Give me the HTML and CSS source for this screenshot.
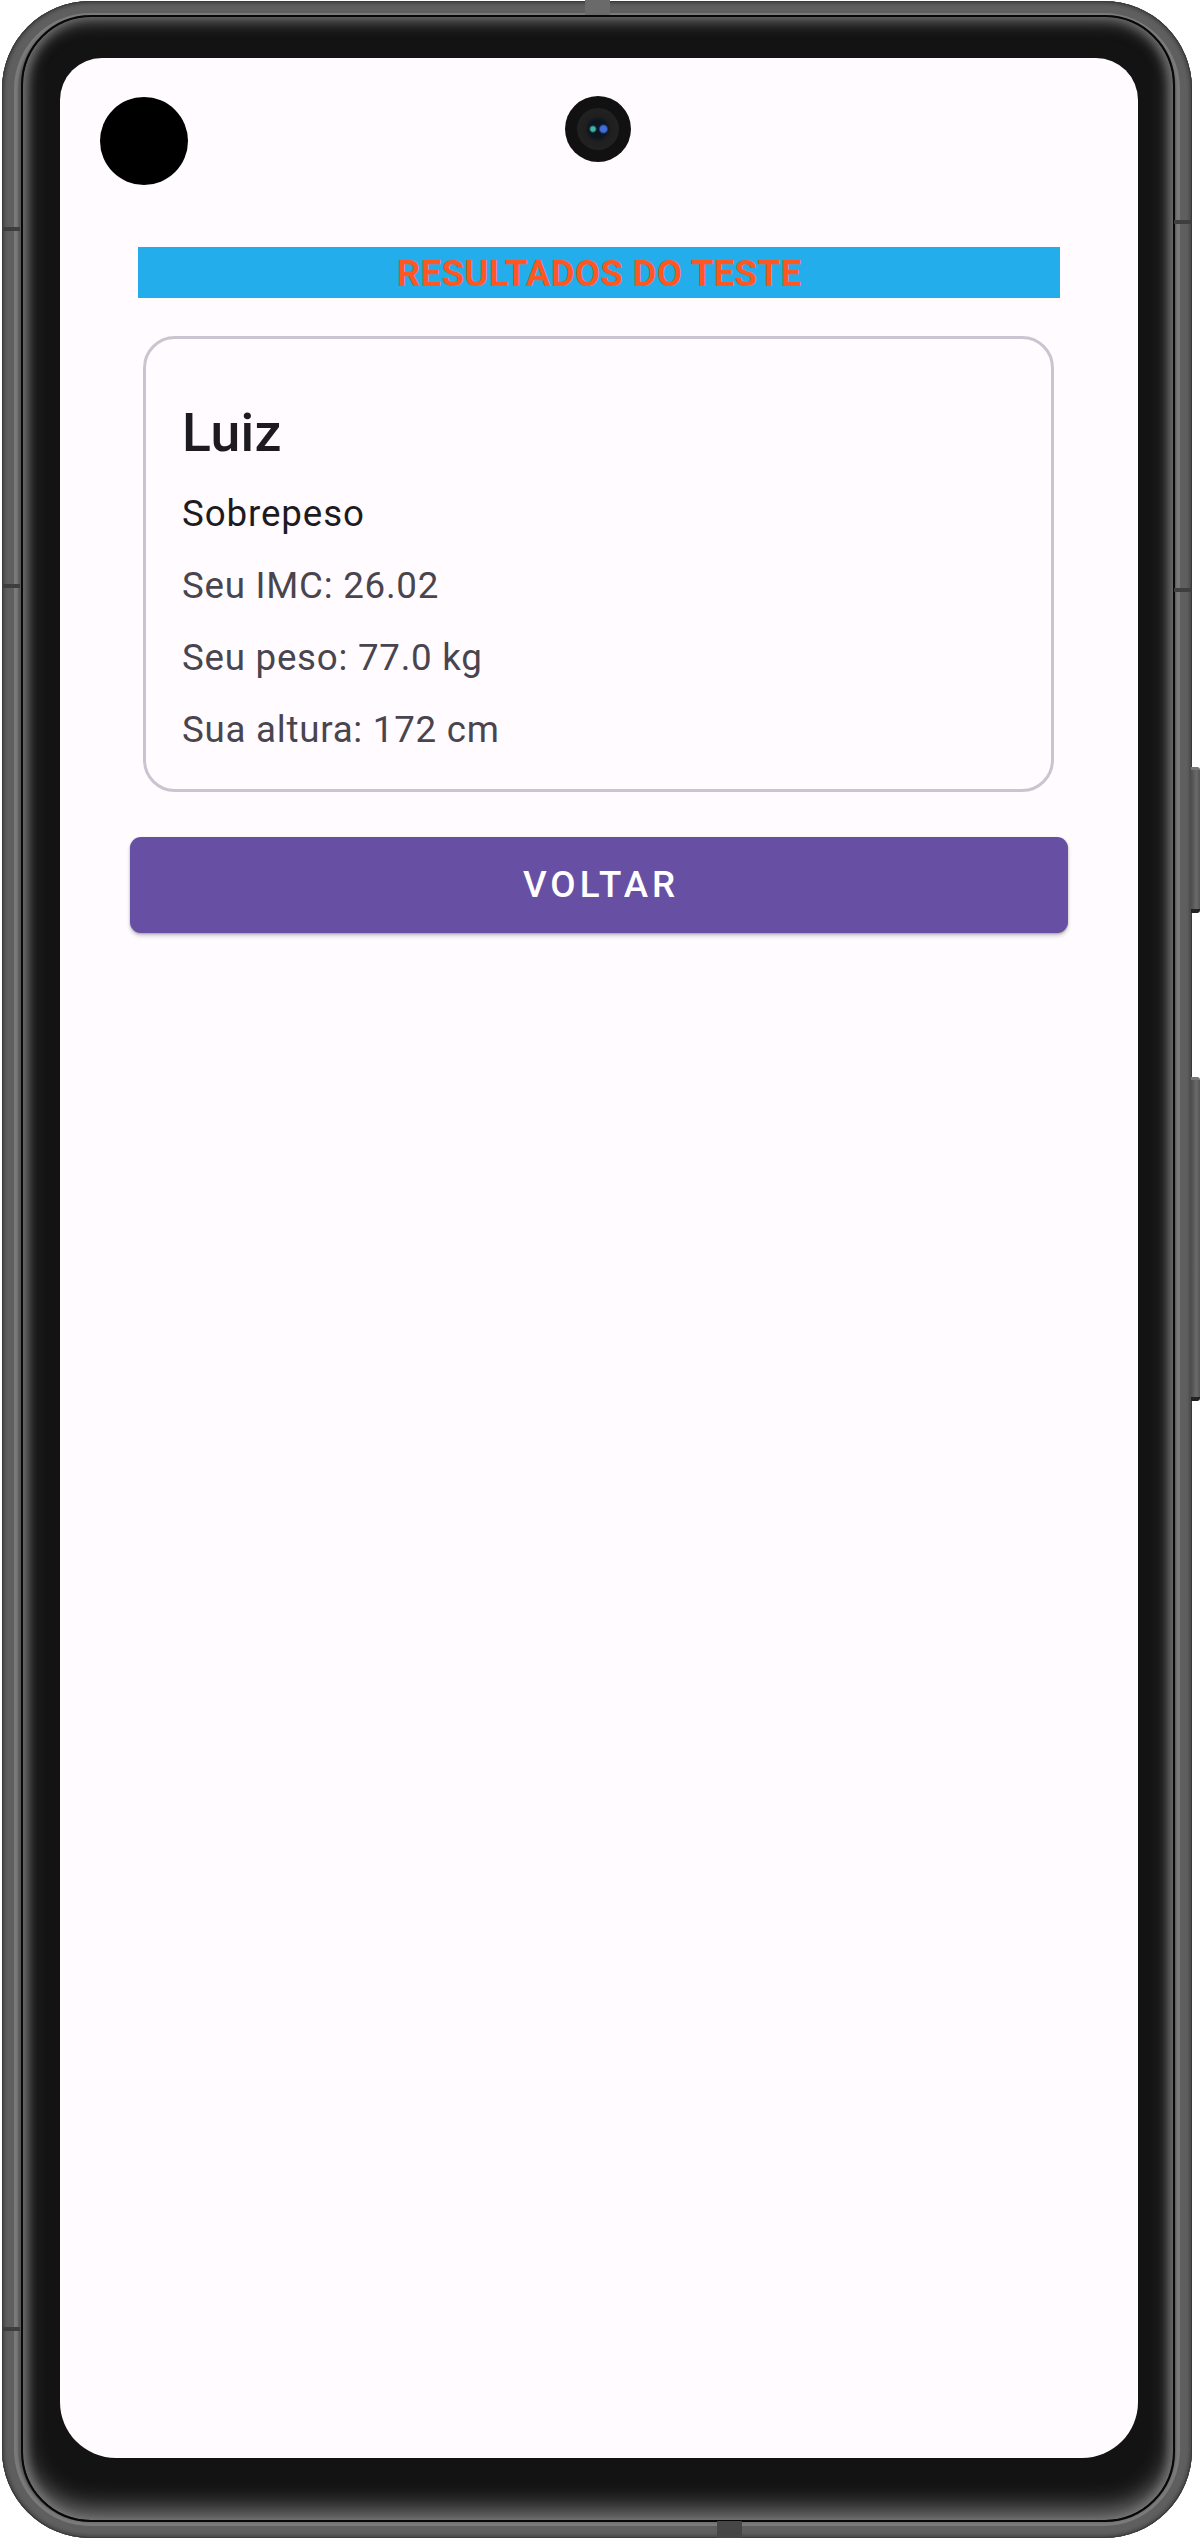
FILE: index.html
```html
<!DOCTYPE html>
<html lang="pt">
<head>
<meta charset="utf-8">
<title>Resultados do teste</title>
<link rel="stylesheet" href="styles.css">
</head>
<body>
<div class="phone">
  <span class="notch notch-top"></span>
  <span class="notch notch-bottom"></span>
  <span class="band band-l1"></span>
  <span class="band band-l2"></span>
  <span class="band band-l3"></span>
  <span class="band band-r1"></span>
  <span class="band band-r2"></span>
  <span class="side-btn side-btn-1"></span>
  <span class="side-btn side-btn-2"></span>
  <div class="ring">
    <div class="screen">
      <span class="dot"></span>
      <span class="camera"><span class="lens"></span></span>
      <main class="content">
        <div class="title-bar">RESULTADOS DO TESTE</div>
        <section class="card">
          <h1 class="name">Luiz</h1>
          <p class="line line-main">Sobrepeso</p>
          <p class="line">Seu IMC: 26.02</p>
          <p class="line">Seu peso: 77.0 kg</p>
          <p class="line">Sua altura: 172 cm</p>
        </section>
        <button class="back-btn" type="button">VOLTAR</button>
      </main>
    </div>
  </div>
</div>
</body>
</html>
```

FILE: styles.css
```css
* {
  box-sizing: border-box;
}

html, body {
  margin: 0;
  padding: 0;
  background: #ffffff;
}

body {
  width: 1200px;
  height: 2541px;
  overflow: hidden;
  font-family: Roboto, "Noto Sans", "Liberation Sans", sans-serif;
}

/* ---------- phone frame ---------- */
.phone {
  position: relative;
  width: 1190px;
  height: 2537px;
  margin: 1px 0 0 2px;
  padding: 14px 17px 16px 19px;
  border-radius: 88px;
  background: #585858;
  box-shadow:
    inset 0 0 0 1px #3a3a3a,
    inset 0 0 3px 3px #4a4a4a,
    inset 0 0 0 12px #5f5f5f,
    inset 0 0 2px 16px #7a7a7a;
}

.ring {
  height: 100%;
  border: 2px solid #080808;
  border-radius: 70px;
  background: #131313;
  padding: 41px 35px 62px 37px;
  box-shadow:
    inset 0 7px 16px -3px #6e6e6e,
    inset 0 -14px 26px -4px #808080,
    inset 7px 0 9px -3px #5a5a5a,
    inset -7px 0 9px -3px #5a5a5a;
}

.notch {
  position: absolute;
  width: 25px;
  display: block;
}

.notch-top {
  left: 583px;
  top: -1px;
  height: 15px;
  background: #6a6a6a;
}

.notch-bottom {
  left: 715px;
  bottom: 0;
  height: 17px;
  background: #464646;
}

.band {
  position: absolute;
  display: block;
  height: 4px;
  width: 18px;
  background: #3e3e3e;
}

.band-l1 { left: 0; top: 226px; }
.band-l2 { left: 0; top: 583px; }
.band-l3 { left: 0; top: 2326px; }
.band-r1 { right: 0; top: 219px; }
.band-r2 { right: 0; top: 587px; }

.side-btn {
  position: absolute;
  right: -8px;
  width: 9px;
  display: block;
  background: linear-gradient(90deg, #4e4e4e, #6a6a6a 60%, #555);
  border-radius: 0 3px 3px 0;
  border-top: 3px solid #777;
  border-bottom: 4px solid #222;
}

.side-btn-1 { top: 766px; height: 146px; }
.side-btn-2 { top: 1076px; height: 324px; }

/* ---------- screen ---------- */
.screen {
  position: relative;
  width: 1078px;
  height: 2400px;
  background: #fffbfe;
  border-radius: 42px 42px 56px 56px;
  overflow: hidden;
}

.dot {
  position: absolute;
  left: 40px;
  top: 39px;
  width: 88px;
  height: 88px;
  border-radius: 50%;
  background: #000;
}

.camera {
  position: absolute;
  left: 505px;
  top: 38px;
  width: 66px;
  height: 66px;
  border-radius: 50%;
  background: #111111;
  display: flex;
  align-items: center;
  justify-content: center;
}

.lens {
  width: 42px;
  height: 42px;
  border-radius: 50%;
  background:
    radial-gradient(circle at 38% 50%, #3fb8a8 0 2px, transparent 4px),
    radial-gradient(circle at 63% 50%, #3f6ee0 0 3px, transparent 5px),
    radial-gradient(circle, #0d1620 0 9px, #1f1f1f 13px, #222 21px);
}

/* ---------- content ---------- */
.content {
  padding-top: 189px;
  display: flex;
  flex-direction: column;
  align-items: flex-start;
}

.title-bar {
  margin-left: 78px;
  width: 922px;
  height: 51px;
  padding-top: 3px;
  background: #23aeeb;
  color: #ff5722;
  font-weight: 700;
  font-size: 36.7px;
  letter-spacing: 0.26px;
  line-height: 48px;
  text-align: center;
}

.card {
  margin: 38px 0 0 83px;
  width: 911px;
  border: 3px solid #cac4d0;
  border-radius: 32px;
  padding: 62px 30px 33.5px 36px;
  display: flex;
  flex-direction: column;
  gap: 20px;
}

.name {
  margin: 0 0 2.5px;
  font-size: 53.5px;
  line-height: 64px;
  font-weight: 500;
  letter-spacing: 0.4px;
  color: #1d1b20;
}

.line {
  margin: 0;
  font-size: 36.7px;
  line-height: 52px;
  letter-spacing: 0.75px;
  color: #49454f;
}

.line-main {
  color: #1d1b20;
  letter-spacing: 0.9px;
}

.back-btn {
  margin: 45px 0 0 70px;
  width: 938px;
  height: 96px;
  border: 0;
  border-radius: 11px;
  background: #6750a4;
  color: #ffffff;
  font-family: Roboto, "Noto Sans", "Liberation Sans", sans-serif;
  font-size: 36.7px;
  font-weight: 500;
  letter-spacing: 4px;
  text-indent: 4px;
  line-height: 96px;
  padding: 0;
  box-shadow: 0 3px 4px rgba(0, 0, 0, 0.18), 0 1px 2px rgba(0, 0, 0, 0.22);
}
```
